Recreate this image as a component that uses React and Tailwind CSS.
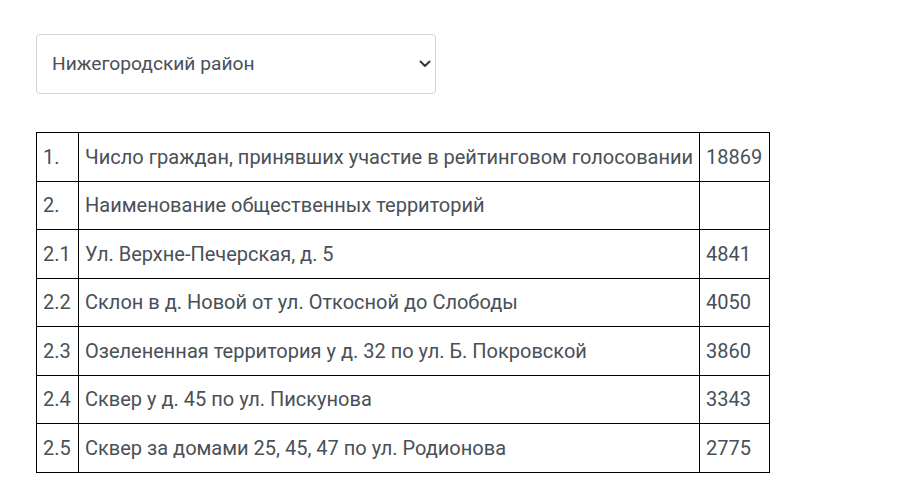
import React from 'react';

const rows = [
  { num: '1.', name: 'Число граждан, принявших участие в рейтинговом голосовании', votes: '18869' },
  { num: '2.', name: 'Наименование общественных территорий', votes: '' },
  { num: '2.1', name: 'Ул. Верхне-Печерская, д. 5', votes: '4841' },
  { num: '2.2', name: 'Склон в д. Новой от ул. Откосной до Слободы', votes: '4050' },
  { num: '2.3', name: 'Озелененная территория у д. 32 по ул. Б. Покровской', votes: '3860' },
  { num: '2.4', name: 'Сквер у д. 45 по ул. Пискунова', votes: '3343' },
  { num: '2.5', name: 'Сквер за домами 25, 45, 47 по ул. Родионова', votes: '2775' },
];

const cell = 'border border-black px-[6px] py-[8.75px] leading-[30px] align-middle whitespace-nowrap';

const App = () => {
  return (
    <div className="min-h-screen bg-white pl-[36px] pt-[34px] font-['Roboto',sans-serif] text-[20px] text-[#495057]">
      {/* выбор района */}
      <div className="flex h-[60px] w-[400px] items-center justify-between rounded-[4px] border border-[#ced4da] pl-[15px] pr-[4px]">
        <span className="text-[19.2px] leading-[28px]">Нижегородский район</span>
        <svg width="12" height="8" viewBox="0 0 12 8">
          <path d="M1.5 1.5 L6 6 L10.5 1.5" fill="none" stroke="#343a40" strokeWidth="2" strokeLinecap="round" strokeLinejoin="round" />
        </svg>
      </div>

      {/* результаты */}
      <table className="mt-[38px] w-[733px] table-fixed border-collapse border border-black">
        <colgroup>
          <col className="w-[42px]" />
          <col className="w-[621px]" />
          <col className="w-[70px]" />
        </colgroup>
        <tbody>
          {rows.map((r) => (
            <tr key={r.num}>
              <td className={cell}>{r.num}</td>
              <td className={cell}>{r.name}</td>
              <td className={cell}>{r.votes}</td>
            </tr>
          ))}
        </tbody>
      </table>
    </div>
  );
};

export default App;
